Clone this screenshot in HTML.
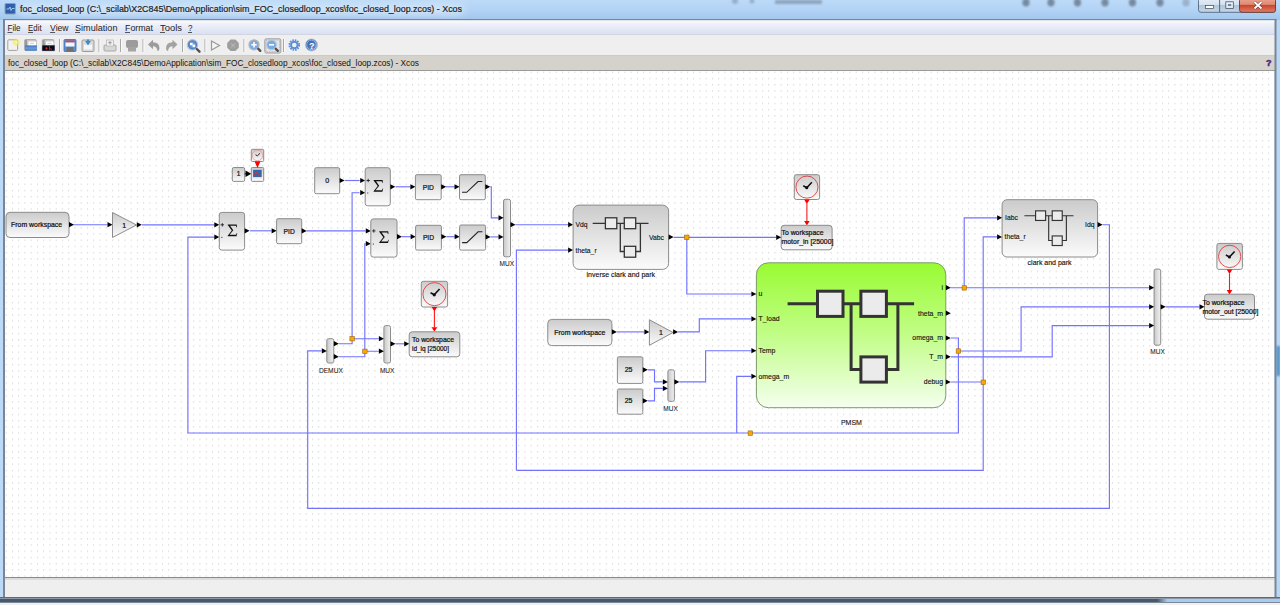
<!DOCTYPE html><html><head><meta charset="utf-8"><style>
html,body{margin:0;padding:0;width:1280px;height:605px;overflow:hidden;background:#fff}
svg{position:absolute;left:0;top:0;display:block}
text{font-family:"Liberation Sans",sans-serif}
</style></head><body>
<svg width="1280" height="605" viewBox="0 0 1280 605">
<defs>
<linearGradient id="gb" x1="0" y1="0" x2="0" y2="1"><stop offset="0" stop-color="#cbcbcb"/><stop offset="1" stop-color="#fbfbfb"/></linearGradient>
<linearGradient id="gmux" x1="0" y1="0" x2="1" y2="0"><stop offset="0" stop-color="#c8c8c8"/><stop offset="1" stop-color="#f2f2f2"/></linearGradient>
<linearGradient id="ggreen" x1="0" y1="0" x2="0" y2="1"><stop offset="0" stop-color="#99fb33"/><stop offset="0.5" stop-color="#c2fd88"/><stop offset="1" stop-color="#f4ffee"/></linearGradient>
<linearGradient id="gtitle" x1="0" y1="0" x2="0" y2="1"><stop offset="0" stop-color="#bcdaf8"/><stop offset="0.45" stop-color="#b4d4f6"/><stop offset="1" stop-color="#a2c6ec"/></linearGradient>
<linearGradient id="gmenu" x1="0" y1="0" x2="0" y2="1"><stop offset="0" stop-color="#fbfcfe"/><stop offset="0.35" stop-color="#eceff9"/><stop offset="1" stop-color="#d9dff1"/></linearGradient>
<linearGradient id="gbtn" x1="0" y1="0" x2="0" y2="1"><stop offset="0" stop-color="#e6eef8"/><stop offset="0.45" stop-color="#d6e2f0"/><stop offset="0.5" stop-color="#b2c4d8"/><stop offset="1" stop-color="#c4d6ea"/></linearGradient>
<linearGradient id="gclose" x1="0" y1="0" x2="0" y2="1"><stop offset="0" stop-color="#eaa898"/><stop offset="0.45" stop-color="#e08872"/><stop offset="0.5" stop-color="#c8442a"/><stop offset="1" stop-color="#e0806a"/></linearGradient>
<linearGradient id="gbot" x1="0" y1="0" x2="1280" y2="0" gradientUnits="userSpaceOnUse"><stop offset="0" stop-color="#46586c"/><stop offset="0.904" stop-color="#46586c"/><stop offset="0.912" stop-color="#a8ccee"/><stop offset="1" stop-color="#a8ccee"/></linearGradient>
<linearGradient id="gopen" x1="0" y1="0" x2="0" y2="1"><stop offset="0" stop-color="#3a70b8"/><stop offset="0.5" stop-color="#6a9ad8"/><stop offset="1" stop-color="#4a80c4"/></linearGradient>
<radialGradient id="glens" cx="0.5" cy="0.5" r="0.5"><stop offset="0" stop-color="#8ab6ec"/><stop offset="1" stop-color="#3f6fc0"/></radialGradient>
<linearGradient id="ghelp" x1="0" y1="0" x2="1" y2="1"><stop offset="0" stop-color="#2a56a0"/><stop offset="1" stop-color="#6a98d4"/></linearGradient>
<filter id="blur05" x="-50%" y="-50%" width="200%" height="200%"><feGaussianBlur stdDeviation="0.35"/></filter>
<filter id="blur1" x="-50%" y="-50%" width="200%" height="200%"><feGaussianBlur stdDeviation="0.8"/></filter>
<filter id="blur4" x="-20%" y="-100%" width="140%" height="300%"><feGaussianBlur stdDeviation="3.5"/></filter>
<filter id="blur3" x="-50%" y="-50%" width="200%" height="200%"><feGaussianBlur stdDeviation="1.6"/></filter>
<pattern id="dots" x="5.7" y="77.8" width="6.25" height="6.22" patternUnits="userSpaceOnUse"><rect x="0" y="0" width="1" height="1.4" fill="#d6d6d6"/></pattern>
</defs>

<rect x="0" y="0" width="1280" height="605" fill="#a9c9ec"/>
<rect x="0" y="0" width="1280" height="20" fill="url(#gtitle)"/>
<rect x="0" y="20" width="4" height="585" fill="#bcdaf7"/>
<rect x="1276" y="20" width="4" height="585" fill="#b9d8f7"/>
<rect x="1276.5" y="346" width="3.5" height="30" fill="#4a90cc" filter="url(#blur1)"/>
<g filter="url(#blur1)" opacity="0.75">
<ellipse cx="1026" cy="2.5" rx="3.6" ry="4" fill="#5f6f82"/>
<ellipse cx="1051" cy="2.5" rx="3.6" ry="4" fill="#5f6f82"/>
<ellipse cx="1077.5" cy="2.5" rx="3.6" ry="4" fill="#5f6f82"/>
<ellipse cx="1105" cy="2.5" rx="3.6" ry="4" fill="#5f6f82"/>
<ellipse cx="1132.5" cy="2.5" rx="3.6" ry="4" fill="#5f6f82"/>
<ellipse cx="1160" cy="2.5" rx="3.6" ry="4" fill="#5f6f82"/>
<ellipse cx="1186" cy="2.5" rx="3.6" ry="4" fill="#90a4ba"/>
<rect x="775" y="0" width="47" height="4" fill="#7f93aa"/>
<circle cx="735" cy="1" r="3" fill="#8aa0b8"/><circle cx="752" cy="1" r="2.5" fill="#8aa0b8"/>
</g>
<rect x="5" y="3.5" width="10.5" height="10.5" rx="1" fill="#2f5fa8" stroke="#8aa0b8" stroke-width="1"/>
<path d="M6.5,9 L9,9 L10,7 L11,10.5 L12,8.5 L14.5,8.5" fill="none" stroke="#aee0ff" stroke-width="0.8"/>
<rect x="18" y="4" width="446" height="11" rx="5" fill="#e4f0fb" opacity="0.6" filter="url(#blur4)"/>
<text x="20" y="12.1" font-size="9.4" text-anchor="start" font-weight="normal" fill="#1e1e1e" font-family="Liberation Sans" textLength="442" lengthAdjust="spacingAndGlyphs" stroke="#1e1e1e" stroke-width="0.2">foc_closed_loop (C:\_scilab\X2C845\DemoApplication\sim_FOC_closedloop_xcos\foc_closed_loop.zcos) - Xcos</text>
<rect x="1198.5" y="-2" width="77" height="14.3" rx="2.5" fill="url(#gbtn)" stroke="#55677c" stroke-width="0.9"/>
<rect x="1239.5" y="-2" width="36" height="14.3" rx="2.5" fill="url(#gclose)" stroke="#6a3a36" stroke-width="0.9"/>
<rect x="1219.2" y="0" width="0.9" height="12" fill="#4a5a6c"/>
<rect x="1205.5" y="5.5" width="8" height="3" fill="#fff" stroke="#3a4656" stroke-width="0.7"/>
<rect x="1225.8" y="1.8" width="7.5" height="6.6" fill="#dfe8f2" stroke="#3a4656" stroke-width="0.7"/>
<rect x="1227.3" y="3.6" width="4.5" height="3" fill="#6e88a8" stroke="#fff" stroke-width="0.7"/>
<path d="M1254.5,2 L1261.5,8.5 M1261.5,2 L1254.5,8.5" stroke="#5a2a24" stroke-width="3"/>
<path d="M1254.5,2 L1261.5,8.5 M1261.5,2 L1254.5,8.5" stroke="#fff" stroke-width="1.9"/>
<rect x="4" y="20" width="1272" height="15" fill="url(#gmenu)"/>
<text x="7.5" y="31" font-size="9" text-anchor="start" font-weight="normal" fill="#222" font-family="Liberation Sans" textLength="13.1" lengthAdjust="spacingAndGlyphs">File</text>
<rect x="7.5" y="32" width="5" height="0.8" fill="#333"/>
<text x="28.1" y="31" font-size="9" text-anchor="start" font-weight="normal" fill="#222" font-family="Liberation Sans" textLength="13.5" lengthAdjust="spacingAndGlyphs">Edit</text>
<rect x="28.1" y="32" width="5" height="0.8" fill="#333"/>
<text x="50.1" y="31" font-size="9" text-anchor="start" font-weight="normal" fill="#222" font-family="Liberation Sans" textLength="18.5" lengthAdjust="spacingAndGlyphs">View</text>
<rect x="50.1" y="32" width="5" height="0.8" fill="#333"/>
<text x="75" y="31" font-size="9" text-anchor="start" font-weight="normal" fill="#222" font-family="Liberation Sans" textLength="42.5" lengthAdjust="spacingAndGlyphs">Simulation</text>
<rect x="75" y="32" width="5" height="0.8" fill="#333"/>
<text x="125" y="31" font-size="9" text-anchor="start" font-weight="normal" fill="#222" font-family="Liberation Sans" textLength="28" lengthAdjust="spacingAndGlyphs">Format</text>
<rect x="125" y="32" width="5" height="0.8" fill="#333"/>
<text x="160" y="31" font-size="9" text-anchor="start" font-weight="normal" fill="#222" font-family="Liberation Sans" textLength="22" lengthAdjust="spacingAndGlyphs">Tools</text>
<rect x="160" y="32" width="5" height="0.8" fill="#333"/>
<text x="188" y="31" font-size="9" text-anchor="start" font-weight="normal" fill="#222" font-family="Liberation Sans" textLength="4.5" lengthAdjust="spacingAndGlyphs">?</text>
<rect x="188" y="32" width="4" height="0.8" fill="#333"/>
<rect x="4" y="34.5" width="1272" height="1" fill="#c8cbd6"/>
<rect x="4" y="35" width="1272" height="20" fill="#efefef"/>
<rect x="4" y="55.5" width="1272" height="15" fill="#d5d1cb"/>
<text x="8" y="66" font-size="8.6" text-anchor="start" font-weight="normal" fill="#111" font-family="Liberation Sans" textLength="411" lengthAdjust="spacingAndGlyphs">foc_closed_loop (C:\_scilab\X2C845\DemoApplication\sim_FOC_closedloop_xcos\foc_closed_loop.zcos) - Xcos</text>
<text x="1266" y="66" font-size="9" text-anchor="start" font-weight="bold" fill="#4a2a80" font-family="Liberation Sans" stroke="#4a2a80" stroke-width="0.5">?</text>
<rect x="5" y="70.5" width="1269.5" height="507" fill="#ffffff"/>
<rect x="5" y="70.5" width="1269.5" height="507" fill="url(#dots)"/>
<rect x="4" y="70" width="1271" height="1" fill="#9a9a9a"/>
<rect x="4" y="577" width="1272" height="1" fill="#8a8a8a"/>
<rect x="4" y="578" width="1272" height="19" fill="#efefef"/>
<rect x="4" y="578" width="1272" height="2" fill="#dcdcdc"/>
<rect x="3" y="19" width="2" height="579" fill="#7b8594"/>
<rect x="1274.5" y="19" width="2" height="579" fill="#7b8594"/>
<rect x="3" y="19" width="1273.5" height="1.2" fill="#7b8594"/>
<rect x="0" y="597" width="1280" height="6" fill="url(#gbot)"/>
<rect x="0" y="597" width="1280" height="1" fill="#626870"/>
<rect x="0" y="598" width="1280" height="1" fill="#8c98a6"/>
<rect x="0" y="602" width="1280" height="1" fill="#7c8896"/>
<rect x="0" y="603" width="1280" height="2" fill="#eef1f4"/>
<rect x="7.8" y="39.8" width="9.8" height="10.6" rx="1" fill="#f2f2f2" stroke="#a2a2a2" stroke-width="1"/>
<circle cx="16.2" cy="42.3" r="2.8" fill="#f4ee44" filter="url(#blur1)"/>
<circle cx="16.2" cy="42.3" r="1" fill="#fffbd0"/>
<rect x="24.6" y="39.5" width="11.5" height="10.8" rx="1" fill="#c8c8c8" stroke="#a0a0a0" stroke-width="0.8"/>
<rect x="25" y="40" width="2" height="10" fill="#9a9a9a"/>
<rect x="28.5" y="41.5" width="7.5" height="4" fill="#ffffff"/>
<path d="M30,43.3 L34,43.3" stroke="#999" stroke-width="0.5"/>
<path d="M25,45.4 L37,45.4 L37,50.7 L24.8,50.7Z" fill="url(#gopen)"/>
<rect x="42.3" y="39.5" width="11.5" height="10.8" rx="1" fill="#c8c8c8" stroke="#a0a0a0" stroke-width="0.8"/>
<rect x="42.7" y="40" width="2" height="10" fill="#9a9a9a"/>
<rect x="46" y="41.5" width="7.5" height="4" fill="#ffffff"/>
<path d="M47.5,43.3 L51.5,43.3" stroke="#999" stroke-width="0.5"/>
<path d="M42.5,45.4 L54.5,45.4 L54.5,50.7 L42.3,50.7Z" fill="#0a0a12" stroke="#1a2a50" stroke-width="0.5"/>
<circle cx="46.5" cy="48.4" r="1.1" fill="#e02020"/><path d="M49.5,46 L49.5,50 M50.5,48 L51.5,50" stroke="#d02020" stroke-width="0.9"/>
<rect x="59" y="39" width="1" height="13" fill="#a8a8a8"/><rect x="60" y="39" width="1" height="13" fill="#fafafa"/>
<rect x="64" y="39.5" width="12" height="12" rx="1" fill="#5b8fd6" stroke="#3a6ab0" stroke-width="0.8"/>
<rect x="65.5" y="40.5" width="9" height="2" fill="#e04040"/>
<rect x="65.5" y="42.5" width="9" height="4" fill="#f4f4f4"/>
<rect x="66.5" y="47" width="7" height="4" fill="#707070"/>
<rect x="82" y="40" width="12" height="11.5" rx="1" fill="#d9d9d9" stroke="#8a8a8a" stroke-width="0.8"/>
<rect x="84" y="44.5" width="8" height="5" fill="#f6f6f6"/>
<path d="M85,41 L91,41 L88,45.5Z" fill="#3d8ad0"/><rect x="87" y="39.5" width="2" height="3" fill="#3d8ad0"/>
<rect x="98.5" y="39" width="1" height="13" fill="#a8a8a8"/><rect x="99.5" y="39" width="1" height="13" fill="#fafafa"/>
<rect x="104" y="45" width="12" height="6" rx="1" fill="#d8d8d8" stroke="#9a9a9a" stroke-width="0.8"/>
<rect x="106.5" y="40" width="7" height="6" fill="#efefef" stroke="#aaa" stroke-width="0.6"/>
<path d="M110,41 L110,44.5 M108.3,42.7 L111.7,42.7" stroke="#888" stroke-width="0.8"/>
<rect x="120" y="39" width="1" height="13" fill="#a8a8a8"/><rect x="121" y="39" width="1" height="13" fill="#fafafa"/>
<rect x="126" y="40" width="12" height="8" rx="2" fill="#9c9c9c"/>
<rect x="128" y="47" width="8" height="4.5" fill="#a4a4a4"/>
<rect x="142.5" y="39" width="1" height="13" fill="#a8a8a8"/><rect x="143.5" y="39" width="1" height="13" fill="#fafafa"/>
<path d="M148,44.5 L153,39.8 L153,42.3 Q159.5,42.3 159.5,48.5 Q159,51 157.5,51 Q157,46.3 153,46.3 L153,49.2Z" fill="#9c9c9c"/>
<path d="M177.5,44.5 L172.5,39.8 L172.5,42.3 Q166,42.3 166,48.5 Q166.5,51 168,51 Q168.5,46.3 172.5,46.3 L172.5,49.2Z" fill="#a2a2a2"/>
<rect x="182" y="39" width="1" height="13" fill="#a8a8a8"/><rect x="183" y="39" width="1" height="13" fill="#fafafa"/>
<circle cx="192.5" cy="44.8" r="5.2" fill="url(#glens)" stroke="#b8c4d2" stroke-width="1.2"/>
<rect x="190" y="42.8" width="2.6" height="2.4" fill="#fff"/><rect x="192.6" y="44.6" width="2.6" height="2.6" fill="#fff"/>
<path d="M196.8,49 L199.5,51.7" stroke="#505050" stroke-width="2.4" stroke-linecap="round"/>
<rect x="204.5" y="39" width="1" height="13" fill="#a8a8a8"/><rect x="205.5" y="39" width="1" height="13" fill="#fafafa"/>
<path d="M211.5,41 L219.5,45.5 L211.5,50Z" fill="#f4f4f4" stroke="#9a9a9a" stroke-width="1.2"/>
<path d="M230.6,39.5 L235.4,39.5 L238.8,42.9 L238.8,47.7 L235.4,51.1 L230.6,51.1 L227.2,47.7 L227.2,42.9Z" fill="#9e9e9e"/>
<path d="M231,43.3 L235,47.3 M235,43.3 L231,47.3" stroke="#b4b4b4" stroke-width="1.1"/>
<rect x="243.5" y="39" width="1" height="13" fill="#a8a8a8"/><rect x="244.5" y="39" width="1" height="13" fill="#fafafa"/>
<circle cx="254" cy="44.8" r="5" fill="#7aaae6" stroke="#b4b4b4" stroke-width="1.3"/>
<path d="M251.3,44.8 L256.7,44.8 M254,42.1 L254,47.5" stroke="#fff" stroke-width="1.6"/>
<path d="M258.3,48.8 L260.3,50.8" stroke="#505050" stroke-width="2.4" stroke-linecap="round"/>
<rect x="264.8" y="38.8" width="16" height="14.2" rx="1.5" fill="#e6e6e6" stroke="#8a8a8a" stroke-width="0.8"/>
<rect x="266" y="40" width="13.6" height="11.8" fill="none" stroke="#9a9a9a" stroke-width="0.8" stroke-dasharray="0.8,0.8"/>
<circle cx="271.5" cy="44.8" r="5" fill="#7aaae6" stroke="#c0cad6" stroke-width="1.3"/>
<path d="M269,44.8 L274,44.8" stroke="#fff" stroke-width="1.6"/>
<path d="M275.8,48.8 L277.8,50.8" stroke="#505050" stroke-width="2.4" stroke-linecap="round"/>
<rect x="283" y="39" width="1" height="13" fill="#a8a8a8"/><rect x="284" y="39" width="1" height="13" fill="#fafafa"/>
<g filter="url(#blur05)">
<circle cx="294.3" cy="45" r="4.6" fill="none" stroke="#5a8ed8" stroke-width="2.4" stroke-dasharray="1.5,0.9"/>
<circle cx="294.3" cy="45" r="3.2" fill="none" stroke="#5a8ed8" stroke-width="1.8"/>
</g>
<circle cx="311.5" cy="45" r="6" fill="url(#ghelp)" stroke="#a8bcd8" stroke-width="0.8"/>
<circle cx="311.5" cy="45" r="4.8" fill="none" stroke="#e0e8f4" stroke-width="0.5"/>
<text x="311.8" y="48.6" font-size="9" text-anchor="middle" font-weight="bold" fill="#fff" font-family="Liberation Sans">?</text>
<g id="diagram">
<path d="M73.5,224.7 L107.5,224.7" fill="none" stroke="#7272ff" stroke-width="1.15"/>
<path d="M142,224.8 L214.5,224.8" fill="none" stroke="#7272ff" stroke-width="1.15"/>
<path d="M250,230.8 L271.6,230.8" fill="none" stroke="#7272ff" stroke-width="1.15"/>
<path d="M306.5,230.9 L365.8,230.9" fill="none" stroke="#7272ff" stroke-width="1.15"/>
<path d="M345,180.5 L359.6,180.5" fill="none" stroke="#7272ff" stroke-width="1.15"/>
<path d="M352.1,338.7 L352.1,192.7 L359.6,192.7" fill="none" stroke="#7272ff" stroke-width="1.15"/>
<path d="M395.5,186.8 L410.6,186.8" fill="none" stroke="#7272ff" stroke-width="1.15"/>
<path d="M446,186.8 L454.6,186.8" fill="none" stroke="#7272ff" stroke-width="1.15"/>
<path d="M490.4,186.8 L491.3,186.8 L491.3,217.8 L498.5,217.8" fill="none" stroke="#7272ff" stroke-width="1.15"/>
<path d="M364.8,351.2 L364.8,243.7 L365.8,243.7" fill="none" stroke="#7272ff" stroke-width="1.15"/>
<path d="M402,236.7 L410.8,236.7" fill="none" stroke="#7272ff" stroke-width="1.15"/>
<path d="M446.4,236.7 L454.8,236.7" fill="none" stroke="#7272ff" stroke-width="1.15"/>
<path d="M490.6,236.9 L498.5,236.9" fill="none" stroke="#7272ff" stroke-width="1.15"/>
<path d="M515.5,224.7 L568.3,224.7" fill="none" stroke="#7272ff" stroke-width="1.15"/>
<path d="M516.4,470.3 L516.4,250.1 L568.3,250.1" fill="none" stroke="#7272ff" stroke-width="1.15"/>
<path d="M673.6,237.3 L776.2,237.3" fill="none" stroke="#7272ff" stroke-width="1.15"/>
<path d="M686.8,237.3 L686.8,294 L751.3,294" fill="none" stroke="#7272ff" stroke-width="1.15"/>
<path d="M616.9,331.9 L644.4,331.9" fill="none" stroke="#7272ff" stroke-width="1.15"/>
<path d="M678.1,331.9 L699.3,331.9 L699.3,318.9 L751.3,318.9" fill="none" stroke="#7272ff" stroke-width="1.15"/>
<path d="M647.8,369.8 L654.5,369.8 L654.5,381.9 L662.9,381.9" fill="none" stroke="#7272ff" stroke-width="1.15"/>
<path d="M647.8,400.8 L654.5,400.8 L654.5,388.4 L662.9,388.4" fill="none" stroke="#7272ff" stroke-width="1.15"/>
<path d="M679.4,381.9 L705.6,381.9 L705.6,350.7 L751.3,350.7" fill="none" stroke="#7272ff" stroke-width="1.15"/>
<path d="M951,338 L958.4,338 L958.4,433 L187.9,433 L187.9,237.1 L214.5,237.1" fill="none" stroke="#7272ff" stroke-width="1.15"/>
<path d="M736.7,433 L736.7,376.3 L751.3,376.3" fill="none" stroke="#7272ff" stroke-width="1.15"/>
<path d="M951,382 L983.2,382" fill="none" stroke="#7272ff" stroke-width="1.15"/>
<path d="M997.1,236.9 L983.2,236.9 L983.2,470.3 L516.4,470.3" fill="none" stroke="#7272ff" stroke-width="1.15"/>
<path d="M1102.6,224.7 L1109.4,224.7 L1109.4,508.4 L307.7,508.4 L307.7,350.9 L321.6,350.9" fill="none" stroke="#7272ff" stroke-width="1.15"/>
<path d="M950.6,287.7 L1149.1,287.7" fill="none" stroke="#7272ff" stroke-width="1.15"/>
<path d="M964.2,287.7 L964.2,217.8 L997.1,217.8" fill="none" stroke="#7272ff" stroke-width="1.15"/>
<path d="M958.4,351 L1021.1,351 L1021.1,306.8 L1149.1,306.8" fill="none" stroke="#7272ff" stroke-width="1.15"/>
<path d="M951,356.8 L1052.2,356.8 L1052.2,325.6 L1149.1,325.6" fill="none" stroke="#7272ff" stroke-width="1.15"/>
<path d="M1165.6,306.8 L1199.5,306.8" fill="none" stroke="#7272ff" stroke-width="1.15"/>
<path d="M338.8,343.7 L352.1,343.7 L352.1,338.7 L378.8,338.7" fill="none" stroke="#7272ff" stroke-width="1.15"/>
<path d="M338.8,356.7 L364.8,356.7 L364.8,351.2 L378.8,351.2" fill="none" stroke="#7272ff" stroke-width="1.15"/>
<path d="M395.5,343.8 L404.2,343.8" fill="none" stroke="#7272ff" stroke-width="1.15"/>
<path d="M806.9,203.5 L806.9,221" fill="none" stroke="#ff1a1a" stroke-width="1.1"/>
<path d="M1229.5,273.5 L1229.5,290" fill="none" stroke="#ff1a1a" stroke-width="1.1"/>
<path d="M434.4,311 L434.4,327.5" fill="none" stroke="#ff1a1a" stroke-width="1.1"/>
<rect x="6" y="212.3" width="63" height="25.19999999999999" rx="4" fill="url(#gb)" stroke="#8c8c8c" stroke-width="1"/>
<text x="36.6" y="227.3" font-size="7" text-anchor="middle" font-weight="normal" fill="#111" font-family="Liberation Sans" textLength="51" lengthAdjust="spacingAndGlyphs" stroke="#111" stroke-width="0.22">From workspace</text>
<path d="M69,222.1 L74,224.7 L69,227.29999999999998Z" fill="#000"/>
<path d="M107.5,222.1 L112.5,224.7 L107.5,227.29999999999998Z" fill="#000"/>
<path d="M112.5,212.5 L136.5,225 L112.5,237.5Z" fill="url(#gb)" stroke="#8c8c8c" stroke-width="1"/>
<text x="124.3" y="227.5" font-size="7" text-anchor="middle" font-weight="normal" fill="#111" font-family="Liberation Sans" stroke="#111" stroke-width="0.22">1</text>
<path d="M136.8,222.20000000000002 L141.8,224.8 L136.8,227.4Z" fill="#000"/>
<path d="M214.3,222.20000000000002 L219.3,224.8 L214.3,227.4Z" fill="#000"/>
<path d="M214.3,234.5 L219.3,237.1 L214.3,239.7Z" fill="#000"/>
<rect x="219.3" y="212.4" width="25.299999999999983" height="37.69999999999999" rx="2.5" fill="url(#gb)" stroke="#8c8c8c" stroke-width="1"/>
<path d="M227.70,224.55 L236.70,224.55 L237.00,227.35 L236.40,227.35 L235.80,225.85 L230.10,225.85 L233.30,230.15 L229.60,234.85 L236.00,234.85 L236.80,233.05 L237.30,233.05 L236.50,236.15 L227.70,236.15 L227.70,235.65 L231.80,230.45 L227.70,225.05Z" fill="#111"/>
<path d="M220.60000000000002,224.8 L224.0,224.8 M222.3,223.10000000000002 L222.3,226.5" stroke="#222" stroke-width="0.9"/>
<rect x="221.3" y="236.9" width="1.1" height="1.1" fill="#444"/>
<path d="M244.6,228.20000000000002 L249.6,230.8 L244.6,233.4Z" fill="#000"/>
<path d="M271.6,228.20000000000002 L276.6,230.8 L271.6,233.4Z" fill="#000"/>
<rect x="276.6" y="218.7" width="25.099999999999966" height="25.0" rx="1.5" fill="url(#gb)" stroke="#8c8c8c" stroke-width="1"/>
<text x="289.15" y="233.79999999999998" font-size="7.2" text-anchor="middle" font-weight="normal" fill="#111" font-family="Liberation Sans" textLength="11.2" lengthAdjust="spacingAndGlyphs" stroke="#111" stroke-width="0.22">PID</text>
<path d="M301.7,228.3 L306.7,230.9 L301.7,233.5Z" fill="#000"/>
<path d="M365.8,228.3 L370.8,230.9 L365.8,233.5Z" fill="#000"/>
<path d="M365.8,241.1 L370.8,243.7 L365.8,246.29999999999998Z" fill="#000"/>
<rect x="314.7" y="167.7" width="25.0" height="26.0" rx="1.5" fill="url(#gb)" stroke="#8c8c8c" stroke-width="1"/>
<text x="327.2" y="183.1" font-size="7" text-anchor="middle" font-weight="normal" fill="#111" font-family="Liberation Sans" stroke="#111" stroke-width="0.22">0</text>
<path d="M339.7,177.9 L344.7,180.5 L339.7,183.1Z" fill="#000"/>
<path d="M360.2,177.9 L365.2,180.5 L360.2,183.1Z" fill="#000"/>
<path d="M360.2,190.1 L365.2,192.7 L360.2,195.29999999999998Z" fill="#000"/>
<rect x="365.2" y="167.7" width="25.100000000000023" height="38.10000000000002" rx="2.5" fill="url(#gb)" stroke="#8c8c8c" stroke-width="1"/>
<path d="M373.60,180.05 L382.60,180.05 L382.90,182.85 L382.30,182.85 L381.70,181.35 L376.00,181.35 L379.20,185.65 L375.50,190.35 L381.90,190.35 L382.70,188.55 L383.20,188.55 L382.40,191.65 L373.60,191.65 L373.60,191.15 L377.70,185.95 L373.60,180.55Z" fill="#111"/>
<path d="M366.5,180.5 L369.9,180.5 M368.2,178.8 L368.2,182.2" stroke="#222" stroke-width="0.9"/>
<rect x="367.2" y="192.5" width="1.1" height="1.1" fill="#444"/>
<path d="M390.3,184.20000000000002 L395.3,186.8 L390.3,189.4Z" fill="#000"/>
<path d="M410.4,184.20000000000002 L415.4,186.8 L410.4,189.4Z" fill="#000"/>
<rect x="415.4" y="174.7" width="25.80000000000001" height="25.0" rx="1.5" fill="url(#gb)" stroke="#8c8c8c" stroke-width="1"/>
<text x="428.29999999999995" y="189.79999999999998" font-size="7.2" text-anchor="middle" font-weight="normal" fill="#111" font-family="Liberation Sans" textLength="11.2" lengthAdjust="spacingAndGlyphs" stroke="#111" stroke-width="0.22">PID</text>
<path d="M441.2,184.20000000000002 L446.2,186.8 L441.2,189.4Z" fill="#000"/>
<path d="M454.5,184.20000000000002 L459.5,186.8 L454.5,189.4Z" fill="#000"/>
<rect x="459.5" y="174.7" width="25.80000000000001" height="25.0" rx="1.5" fill="url(#gb)" stroke="#8c8c8c" stroke-width="1"/>
<path d="M462.0,192.29999999999998 L466.7,192.29999999999998 L478.0,181.5 L482.3,181.5" fill="none" stroke="#222" stroke-width="1.1"/>
<path d="M485.3,184.20000000000002 L490.3,186.8 L485.3,189.4Z" fill="#000"/>
<rect x="370.8" y="218.9" width="26.19999999999999" height="38.20000000000002" rx="2.5" fill="url(#gb)" stroke="#8c8c8c" stroke-width="1"/>
<path d="M379.20,231.30 L388.20,231.30 L388.50,234.10 L387.90,234.10 L387.30,232.60 L381.60,232.60 L384.80,236.90 L381.10,241.60 L387.50,241.60 L388.30,239.80 L388.80,239.80 L388.00,242.90 L379.20,242.90 L379.20,242.40 L383.30,237.20 L379.20,231.80Z" fill="#111"/>
<path d="M372.1,230.9 L375.5,230.9 M373.8,229.20000000000002 L373.8,232.6" stroke="#222" stroke-width="0.9"/>
<rect x="372.8" y="243.5" width="1.1" height="1.1" fill="#444"/>
<path d="M397,234.1 L402,236.7 L397,239.29999999999998Z" fill="#000"/>
<path d="M410.6,234.1 L415.6,236.7 L410.6,239.29999999999998Z" fill="#000"/>
<rect x="415.6" y="225.3" width="25.799999999999955" height="24.799999999999983" rx="1.5" fill="url(#gb)" stroke="#8c8c8c" stroke-width="1"/>
<text x="428.5" y="240.29999999999998" font-size="7.2" text-anchor="middle" font-weight="normal" fill="#111" font-family="Liberation Sans" textLength="11.2" lengthAdjust="spacingAndGlyphs" stroke="#111" stroke-width="0.22">PID</text>
<path d="M441.4,234.1 L446.4,236.7 L441.4,239.29999999999998Z" fill="#000"/>
<path d="M454.6,234.1 L459.6,236.7 L454.6,239.29999999999998Z" fill="#000"/>
<rect x="459.6" y="225" width="26.0" height="25.099999999999994" rx="1.5" fill="url(#gb)" stroke="#8c8c8c" stroke-width="1"/>
<path d="M462.1,242.6 L466.8,242.6 L478.1,231.8 L482.40000000000003,231.8" fill="none" stroke="#222" stroke-width="1.1"/>
<path d="M485.6,234.3 L490.6,236.9 L485.6,239.5Z" fill="#000"/>
<rect x="503.5" y="199.3" width="7.0" height="57.5" rx="1.8" fill="url(#gmux)" stroke="#8c8c8c" stroke-width="1"/>
<path d="M498.5,215.20000000000002 L503.5,217.8 L498.5,220.4Z" fill="#000"/>
<path d="M498.5,234.3 L503.5,236.9 L498.5,239.5Z" fill="#000"/>
<path d="M510.5,222.1 L515.5,224.7 L510.5,227.29999999999998Z" fill="#000"/>
<text x="506.8" y="265.6" font-size="7.4" text-anchor="middle" font-weight="normal" fill="#222" font-family="Liberation Sans" textLength="14.5" lengthAdjust="spacingAndGlyphs" stroke="#222" stroke-width="0.08">MUX</text>
<path d="M568.1,222.1 L573.1,224.7 L568.1,227.29999999999998Z" fill="#000"/>
<path d="M568.1,247.5 L573.1,250.1 L568.1,252.7Z" fill="#000"/>
<rect x="573.1" y="205.1" width="95.5" height="64.29999999999998" rx="6" fill="url(#gb)" stroke="#8c8c8c" stroke-width="1"/>
<path d="M592.7,223.3 L648.5,223.3" stroke="#333" stroke-width="1.3"/>
<path d="M620.3000000000001,223.3 L620.3000000000001,251.5 L640.4000000000001,251.5 L640.4000000000001,223.3" fill="none" stroke="#333" stroke-width="1.3"/>
<rect x="605.4000000000001" y="217.8" width="11.4" height="10.9" fill="#ececec" stroke="#333" stroke-width="1.3"/>
<rect x="624.3000000000001" y="217.8" width="11.4" height="10.9" fill="#ececec" stroke="#333" stroke-width="1.3"/>
<rect x="624.3000000000001" y="246.3" width="11.4" height="10.9" fill="#ececec" stroke="#333" stroke-width="1.3"/>
<text x="575.5" y="227.2" font-size="6.8" text-anchor="start" font-weight="normal" fill="#111" font-family="Liberation Sans" stroke="#111" stroke-width="0.12">Vdq</text>
<text x="575.5" y="252.6" font-size="6.8" text-anchor="start" font-weight="normal" fill="#111" font-family="Liberation Sans" stroke="#111" stroke-width="0.12">theta_r</text>
<text x="664" y="239.5" font-size="6.8" text-anchor="end" font-weight="normal" fill="#111" font-family="Liberation Sans" stroke="#111" stroke-width="0.12">Vabc</text>
<path d="M668.6,234.5 L673.6,237.1 L668.6,239.7Z" fill="#000"/>
<text x="620.8" y="277.4" font-size="7" text-anchor="middle" font-weight="normal" fill="#111" font-family="Liberation Sans" stroke="#111" stroke-width="0.14">inverse clark and park</text>
<rect x="684.5999999999999" y="235.10000000000002" width="4.4" height="4.4" fill="#ffa500" stroke="#9a6a10" stroke-width="0.6"/>
<rect x="794.3" y="174.7" width="25.300000000000068" height="24.80000000000001" rx="2" fill="url(#gb)" stroke="#8c8c8c" stroke-width="1"/>
<circle cx="806.95" cy="187.1" r="11.050000000000034" fill="none" stroke="#e02828" stroke-width="0.8"/>
<path d="M803.2340707964602,185.73097345132743 L806.7544247787611,187.6867256637168 L811.8393805309735,182.21061946902654" fill="none" stroke="#111" stroke-width="1.5646017699115093"/>
<circle cx="806.7544247787611" cy="187.6867256637168" r="1.5646017699115093" fill="#111"/>
<path d="M804.1,199.5 L809.6999999999999,199.5 L806.9,204.0Z" fill="#f00"/>
<path d="M804.1,221 L809.6999999999999,221 L806.9,225.5Z" fill="#f00"/>
<rect x="781.2" y="225.3" width="50.9" height="24.5" rx="3" fill="url(#gb)" stroke="#8c8c8c" stroke-width="1"/>
<path d="M776.2,234.70000000000002 L781.2,237.3 L776.2,239.9Z" fill="#000"/>
<text x="781.5" y="235.2" font-size="6.9" text-anchor="start" font-weight="normal" fill="#111" font-family="Liberation Sans" textLength="42" lengthAdjust="spacingAndGlyphs" stroke="#111" stroke-width="0.22">To workspace</text>
<text x="781.5" y="244.2" font-size="6.9" text-anchor="start" font-weight="normal" fill="#111" font-family="Liberation Sans" textLength="52" lengthAdjust="spacingAndGlyphs" stroke="#111" stroke-width="0.22">motor_in  [25000]</text>
<rect x="756.4" y="262.8" width="189.4" height="144.9" rx="12" fill="url(#ggreen)" stroke="#7d9a6a" stroke-width="1"/>
<path d="M787.6,303.7 L914.1,303.7" stroke="#333" stroke-width="3"/>
<path d="M851.1,303.7 L851.1,369.4 L897.9,369.4 L897.9,303.7" fill="none" stroke="#333" stroke-width="3"/>
<rect x="817.5" y="291.2" width="25.5" height="25.2" fill="#ebebeb" stroke="#333" stroke-width="3"/>
<rect x="860.9" y="291.2" width="25.5" height="25.2" fill="#ebebeb" stroke="#333" stroke-width="3"/>
<rect x="860.9" y="356.9" width="25.5" height="25.2" fill="#ebebeb" stroke="#333" stroke-width="3"/>
<path d="M751.4,291.4 L756.4,294 L751.4,296.6Z" fill="#000"/>
<text x="758.5" y="296.4" font-size="6.9" text-anchor="start" font-weight="normal" fill="#111" font-family="Liberation Sans" stroke="#111" stroke-width="0.12">u</text>
<path d="M751.4,316.29999999999995 L756.4,318.9 L751.4,321.5Z" fill="#000"/>
<text x="758.5" y="321.29999999999995" font-size="6.9" text-anchor="start" font-weight="normal" fill="#111" font-family="Liberation Sans" stroke="#111" stroke-width="0.12">T_load</text>
<path d="M751.4,348.09999999999997 L756.4,350.7 L751.4,353.3Z" fill="#000"/>
<text x="758.5" y="353.09999999999997" font-size="6.9" text-anchor="start" font-weight="normal" fill="#111" font-family="Liberation Sans" stroke="#111" stroke-width="0.12">Temp</text>
<path d="M751.4,373.7 L756.4,376.3 L751.4,378.90000000000003Z" fill="#000"/>
<text x="758.5" y="378.7" font-size="6.9" text-anchor="start" font-weight="normal" fill="#111" font-family="Liberation Sans" stroke="#111" stroke-width="0.12">omega_m</text>
<path d="M945.8,285.09999999999997 L950.8,287.7 L945.8,290.3Z" fill="#000"/>
<text x="943" y="290.09999999999997" font-size="6.9" text-anchor="end" font-weight="normal" fill="#111" font-family="Liberation Sans" stroke="#111" stroke-width="0.12">i</text>
<path d="M945.8,310.59999999999997 L950.8,313.2 L945.8,315.8Z" fill="#000"/>
<text x="943" y="315.59999999999997" font-size="6.9" text-anchor="end" font-weight="normal" fill="#111" font-family="Liberation Sans" stroke="#111" stroke-width="0.12">theta_m</text>
<path d="M945.8,335.4 L950.8,338 L945.8,340.6Z" fill="#000"/>
<text x="943" y="340.4" font-size="6.9" text-anchor="end" font-weight="normal" fill="#111" font-family="Liberation Sans" stroke="#111" stroke-width="0.12">omega_m</text>
<path d="M945.8,354.2 L950.8,356.8 L945.8,359.40000000000003Z" fill="#000"/>
<text x="943" y="359.2" font-size="6.9" text-anchor="end" font-weight="normal" fill="#111" font-family="Liberation Sans" stroke="#111" stroke-width="0.12">T_m</text>
<path d="M945.8,379.4 L950.8,382 L945.8,384.6Z" fill="#000"/>
<text x="943" y="384.4" font-size="6.9" text-anchor="end" font-weight="normal" fill="#111" font-family="Liberation Sans" stroke="#111" stroke-width="0.12">debug</text>
<text x="851.4" y="425" font-size="7" text-anchor="middle" font-weight="normal" fill="#111" font-family="Liberation Sans" stroke="#111" stroke-width="0.1">PMSM</text>
<rect x="962.0999999999999" y="285.7" width="4.4" height="4.4" fill="#ffa500" stroke="#9a6a10" stroke-width="0.6"/>
<rect x="956.1999999999999" y="348.8" width="4.4" height="4.4" fill="#ffa500" stroke="#9a6a10" stroke-width="0.6"/>
<rect x="981.0999999999999" y="380.0" width="4.4" height="4.4" fill="#ffa500" stroke="#9a6a10" stroke-width="0.6"/>
<rect x="748.0999999999999" y="430.90000000000003" width="4.4" height="4.4" fill="#ffa500" stroke="#9a6a10" stroke-width="0.6"/>
<rect x="349.90000000000003" y="336.5" width="4.4" height="4.4" fill="#ffa500" stroke="#9a6a10" stroke-width="0.6"/>
<rect x="362.7" y="349.1" width="4.4" height="4.4" fill="#ffa500" stroke="#9a6a10" stroke-width="0.6"/>
<rect x="547.75" y="319.4" width="64.14999999999998" height="26.200000000000045" rx="4" fill="url(#gb)" stroke="#8c8c8c" stroke-width="1"/>
<text x="579.8" y="334.5" font-size="7" text-anchor="middle" font-weight="normal" fill="#111" font-family="Liberation Sans" textLength="51" lengthAdjust="spacingAndGlyphs" stroke="#111" stroke-width="0.22">From workspace</text>
<path d="M611.9,329.29999999999995 L616.9,331.9 L611.9,334.5Z" fill="#000"/>
<path d="M644.4,329.29999999999995 L649.4,331.9 L644.4,334.5Z" fill="#000"/>
<path d="M649.4,319.75 L673.1,332.5 L649.4,345.25Z" fill="url(#gb)" stroke="#8c8c8c" stroke-width="1"/>
<text x="661" y="334.6" font-size="7" text-anchor="middle" font-weight="normal" fill="#111" font-family="Liberation Sans" stroke="#111" stroke-width="0.22">1</text>
<path d="M673.1,329.29999999999995 L678.1,331.9 L673.1,334.5Z" fill="#000"/>
<rect x="617.4" y="356.8" width="25.399999999999977" height="26.599999999999966" rx="1.5" fill="url(#gb)" stroke="#8c8c8c" stroke-width="1"/>
<text x="628.6" y="372.3" font-size="7" text-anchor="middle" font-weight="normal" fill="#111" font-family="Liberation Sans" stroke="#111" stroke-width="0.22">25</text>
<rect x="617.4" y="389" width="25.399999999999977" height="25.19999999999999" rx="1.5" fill="url(#gb)" stroke="#8c8c8c" stroke-width="1"/>
<text x="628.6" y="403.3" font-size="7" text-anchor="middle" font-weight="normal" fill="#111" font-family="Liberation Sans" stroke="#111" stroke-width="0.22">25</text>
<path d="M642.8,367.2 L647.8,369.8 L642.8,372.40000000000003Z" fill="#000"/>
<path d="M642.8,398.2 L647.8,400.8 L642.8,403.40000000000003Z" fill="#000"/>
<rect x="667.9" y="369.8" width="6.5" height="31.599999999999966" rx="1.8" fill="url(#gmux)" stroke="#8c8c8c" stroke-width="1"/>
<path d="M662.9,379.29999999999995 L667.9,381.9 L662.9,384.5Z" fill="#000"/>
<path d="M662.9,385.79999999999995 L667.9,388.4 L662.9,391.0Z" fill="#000"/>
<path d="M674.4,379.29999999999995 L679.4,381.9 L674.4,384.5Z" fill="#000"/>
<text x="670.6" y="411.2" font-size="7.4" text-anchor="middle" font-weight="normal" fill="#222" font-family="Liberation Sans" textLength="14.5" lengthAdjust="spacingAndGlyphs" stroke="#222" stroke-width="0.08">MUX</text>
<rect x="1002.1" y="199.7" width="95.49999999999989" height="57.30000000000001" rx="5" fill="url(#gb)" stroke="#8c8c8c" stroke-width="1"/>
<path d="M1024.4,215.7 L1073.5040000000001,215.7" stroke="#333" stroke-width="1.1440000000000001"/>
<path d="M1048.688,215.7 L1048.688,240.516 L1066.3760000000002,240.516 L1066.3760000000002,215.7" fill="none" stroke="#333" stroke-width="1.1440000000000001"/>
<rect x="1035.576" y="210.85999999999999" width="10.032" height="9.592" fill="#ececec" stroke="#333" stroke-width="1.1440000000000001"/>
<rect x="1052.208" y="210.85999999999999" width="10.032" height="9.592" fill="#ececec" stroke="#333" stroke-width="1.1440000000000001"/>
<rect x="1052.208" y="235.94" width="10.032" height="9.592" fill="#ececec" stroke="#333" stroke-width="1.1440000000000001"/>
<path d="M997.1,215.20000000000002 L1002.1,217.8 L997.1,220.4Z" fill="#000"/>
<path d="M997.1,234.3 L1002.1,236.9 L997.1,239.5Z" fill="#000"/>
<text x="1005" y="220.3" font-size="6.8" text-anchor="start" font-weight="normal" fill="#111" font-family="Liberation Sans" stroke="#111" stroke-width="0.12">Iabc</text>
<text x="1004.5" y="239.4" font-size="6.8" text-anchor="start" font-weight="normal" fill="#111" font-family="Liberation Sans" stroke="#111" stroke-width="0.12">theta_r</text>
<text x="1094.5" y="227.2" font-size="6.8" text-anchor="end" font-weight="normal" fill="#111" font-family="Liberation Sans" stroke="#111" stroke-width="0.12">Idq</text>
<path d="M1097.6,222.1 L1102.6,224.7 L1097.6,227.29999999999998Z" fill="#000"/>
<text x="1049.6" y="265" font-size="7" text-anchor="middle" font-weight="normal" fill="#111" font-family="Liberation Sans" stroke="#111" stroke-width="0.14">clark and park</text>
<rect x="1154.1" y="269.1" width="6.600000000000136" height="76.09999999999997" rx="1.8" fill="url(#gmux)" stroke="#8c8c8c" stroke-width="1"/>
<path d="M1149.1,285.09999999999997 L1154.1,287.7 L1149.1,290.3Z" fill="#000"/>
<path d="M1149.1,304.2 L1154.1,306.8 L1149.1,309.40000000000003Z" fill="#000"/>
<path d="M1149.1,323.0 L1154.1,325.6 L1149.1,328.20000000000005Z" fill="#000"/>
<path d="M1160.7,304.2 L1165.7,306.8 L1160.7,309.40000000000003Z" fill="#000"/>
<text x="1157.6" y="354" font-size="7.4" text-anchor="middle" font-weight="normal" fill="#222" font-family="Liberation Sans" textLength="14.5" lengthAdjust="spacingAndGlyphs" stroke="#222" stroke-width="0.08">MUX</text>
<rect x="1216.9" y="243.4" width="25.5" height="25.99999999999997" rx="2" fill="url(#gb)" stroke="#8c8c8c" stroke-width="1"/>
<circle cx="1229.65" cy="256.4" r="11.15" fill="none" stroke="#e02828" stroke-width="0.8"/>
<path d="M1225.9004424778761,255.01858407079644 L1229.4526548672568,256.9920353982301 L1234.5836283185843,251.4663716814159" fill="none" stroke="#111" stroke-width="1.5787610619469028"/>
<circle cx="1229.4526548672568" cy="256.9920353982301" r="1.5787610619469028" fill="#111"/>
<path d="M1226.7,269.4 L1232.3,269.4 L1229.5,273.9Z" fill="#f00"/>
<path d="M1226.7,290 L1232.3,290 L1229.5,294.5Z" fill="#f00"/>
<rect x="1204.5" y="294.2" width="50" height="25" rx="3" fill="url(#gb)" stroke="#8c8c8c" stroke-width="1"/>
<path d="M1199.5,304.2 L1204.5,306.8 L1199.5,309.40000000000003Z" fill="#000"/>
<text x="1202.5" y="305.2" font-size="6.9" text-anchor="start" font-weight="normal" fill="#111" font-family="Liberation Sans" textLength="42" lengthAdjust="spacingAndGlyphs" stroke="#111" stroke-width="0.22">To workspace</text>
<text x="1202.5" y="314.2" font-size="6.9" text-anchor="start" font-weight="normal" fill="#111" font-family="Liberation Sans" textLength="56" lengthAdjust="spacingAndGlyphs" stroke="#111" stroke-width="0.22">motor_out  [25000]</text>
<rect x="326.8" y="338.7" width="7.0" height="24.30000000000001" rx="1.8" fill="url(#gmux)" stroke="#8c8c8c" stroke-width="1"/>
<path d="M321.8,348.29999999999995 L326.8,350.9 L321.8,353.5Z" fill="#000"/>
<path d="M333.8,341.09999999999997 L338.8,343.7 L333.8,346.3Z" fill="#000"/>
<path d="M333.8,354.09999999999997 L338.8,356.7 L333.8,359.3Z" fill="#000"/>
<text x="330.9" y="373.2" font-size="7.4" text-anchor="middle" font-weight="normal" fill="#222" font-family="Liberation Sans" textLength="24" lengthAdjust="spacingAndGlyphs" stroke="#222" stroke-width="0.08">DEMUX</text>
<rect x="383.9" y="325.6" width="6.600000000000023" height="37.39999999999998" rx="1.8" fill="url(#gmux)" stroke="#8c8c8c" stroke-width="1"/>
<path d="M378.9,336.09999999999997 L383.9,338.7 L378.9,341.3Z" fill="#000"/>
<path d="M378.9,348.59999999999997 L383.9,351.2 L378.9,353.8Z" fill="#000"/>
<path d="M390.5,341.2 L395.5,343.8 L390.5,346.40000000000003Z" fill="#000"/>
<text x="387.2" y="373.2" font-size="7.4" text-anchor="middle" font-weight="normal" fill="#222" font-family="Liberation Sans" textLength="14.5" lengthAdjust="spacingAndGlyphs" stroke="#222" stroke-width="0.08">MUX</text>
<rect x="421.3" y="281.3" width="26.30000000000001" height="25.69999999999999" rx="2" fill="url(#gb)" stroke="#8c8c8c" stroke-width="1"/>
<circle cx="434.45000000000005" cy="294.15" r="11.550000000000006" fill="none" stroke="#e02828" stroke-width="0.8"/>
<path d="M430.5659292035399,292.71902654867256 L434.245575221239,294.7632743362832 L439.5606194690266,289.0393805309734" fill="none" stroke="#111" stroke-width="1.6353982300884962"/>
<circle cx="434.245575221239" cy="294.7632743362832" r="1.6353982300884962" fill="#111"/>
<path d="M431.59999999999997,307 L437.2,307 L434.4,311.5Z" fill="#f00"/>
<path d="M431.59999999999997,327.3 L437.2,327.3 L434.4,331.8Z" fill="#f00"/>
<rect x="409.2" y="331.8" width="50.6" height="25" rx="3" fill="url(#gb)" stroke="#8c8c8c" stroke-width="1"/>
<path d="M404.2,341.2 L409.2,343.8 L404.2,346.40000000000003Z" fill="#000"/>
<text x="412" y="342.2" font-size="6.9" text-anchor="start" font-weight="normal" fill="#111" font-family="Liberation Sans" textLength="42" lengthAdjust="spacingAndGlyphs" stroke="#111" stroke-width="0.22">To workspace</text>
<text x="412" y="351.2" font-size="6.9" text-anchor="start" font-weight="normal" fill="#111" font-family="Liberation Sans" textLength="37" lengthAdjust="spacingAndGlyphs" stroke="#111" stroke-width="0.22">id_iq [25000]</text>
<rect x="232.3" y="167.5" width="12.399999999999977" height="13.900000000000006" rx="1.5" fill="url(#gb)" stroke="#8c8c8c" stroke-width="1"/>
<text x="238.5" y="176.3" font-size="6.5" text-anchor="middle" font-weight="normal" fill="#111" font-family="Liberation Sans" stroke="#111" stroke-width="0.22">1</text>
<path d="M244.7,173.8 L246,173.8" fill="none" stroke="#0000aa" stroke-width="1"/>
<path d="M245.5,170.5 L251.3,173.8 L245.5,177.1Z" fill="#000"/>
<rect x="251.3" y="167.5" width="12.399999999999977" height="13.900000000000006" rx="1" fill="url(#gb)" stroke="#8c8c8c" stroke-width="1"/>
<rect x="253.1" y="169.8" width="8.6" height="7.3" fill="#3366aa"/>
<path d="M254,175.5 L256.5,172 L260.5,176.5" fill="none" stroke="#e03030" stroke-width="0.8"/>
<rect x="251.3" y="149.3" width="12.399999999999977" height="12.199999999999989" rx="1" fill="url(#gb)" stroke="#8c8c8c" stroke-width="1"/>
<circle cx="257.5" cy="155.4" r="5.3" fill="none" stroke="#e88" stroke-width="0.7"/>
<path d="M255.5,154.8 L257.4,155.8 L260,153.3" fill="none" stroke="#111" stroke-width="0.9"/>
<path d="M254.6,161.5 L260.4,161.5 L257.5,168Z" fill="#f00"/>
</g>
</svg></body></html>
